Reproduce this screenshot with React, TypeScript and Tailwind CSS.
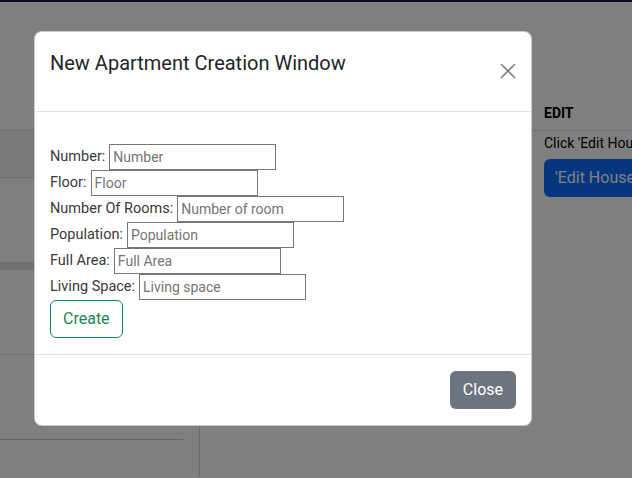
import { useState } from 'react';

const fields = [
  { label: 'Number:', placeholder: 'Number' },
  { label: 'Floor:', placeholder: 'Floor' },
  { label: 'Number Of Rooms:', placeholder: 'Number of room' },
  { label: 'Population:', placeholder: 'Population' },
  { label: 'Full Area:', placeholder: 'Full Area' },
  { label: 'Living Space:', placeholder: 'Living space' },
];

function CloseIcon() {
  return (
    <svg className="w-[16px] h-[16px]" viewBox="0 0 16 16" fill="none" stroke="#808080" strokeWidth={1.6}>
      <path d="M1 1l14 14M15 1L1 15" />
    </svg>
  );
}

export default function App() {
  const [values, setValues] = useState<Record<string, string>>({});

  return (
    <div className="relative w-[632px] h-[478px] overflow-hidden bg-white font-['Roboto',sans-serif] text-[#212529]">
      {/* Page behind the modal */}
      <div className="h-[2px] bg-[#1a1e3a]" />
      <div className="flex h-[129px] items-end border-b border-[#dedede]">
        <div className="flex-1" />
        <div className="w-[88px] pb-[6px] text-[14px] font-bold text-black">EDIT</div>
      </div>
      <div className="flex h-[346px]">
        <aside className="w-[200px] border-r border-[#d6d6d6]">
          <div className="h-[47px] bg-[#f5f5f5] border-b border-[#dedede]" />
          <div className="h-[84px]" />
          <div className="h-[8px] bg-[#e2e2e2]" />
          <div className="h-[85px] border-b border-[#dedede]" />
          <div className="h-[85px] w-[183px] border-b border-[#d0d0d0]" />
        </aside>
        <div className="flex-1" />
        <div className="w-[88px] overflow-hidden whitespace-nowrap pt-[3px]">
          <p className="text-[14px] leading-[18px] text-black">Click 'Edit House' to edit</p>
          <button className="mt-[7px] h-[38px] rounded-[6px] bg-[#0d6efd] px-[11px] text-[16px] text-white">
            'Edit House'
          </button>
        </div>
      </div>

      {/* Backdrop */}
      <div className="absolute inset-0 bg-black/50" />

      {/* Modal */}
      <div className="absolute left-[34px] top-[31px] w-[498px] rounded-[8px] border border-black/20 bg-white">
        <div className="flex h-[80px] items-start justify-between border-b border-[#dee2e6] pl-[15px] pr-[15px] pt-[16px]">
          <h5 className="text-[20px] leading-[30px] font-normal text-[#212529]">New Apartment Creation Window</h5>
          <button className="mt-[15px]">
            <CloseIcon />
          </button>
        </div>

        <div className="px-[15px] pt-[32px] pb-[16px]">
          {fields.map((f) => (
            <div key={f.label} className="flex h-[26px] items-center gap-[4px] text-[14.5px] text-[#383838]">
              <span>{f.label}</span>
              <input
                className="h-[26px] w-[167px] border border-[#767676] px-[3px] text-[14px] outline-none placeholder:text-[#757575]"
                placeholder={f.placeholder}
                value={values[f.label] ?? ''}
                onChange={(e) => setValues((prev) => ({ ...prev, [f.label]: e.target.value }))}
              />
            </div>
          ))}
          <button className="h-[38px] rounded-[6px] border border-[#198754] px-[12px] text-[16px] text-[#198754]">
            Create
          </button>
        </div>

        <div className="flex justify-end border-t border-[#dee2e6] py-[12px] pl-[12px] pr-[11px]">
          <button className="m-[4px] h-[38px] rounded-[6px] bg-[#6c757d] px-[13px] text-[16px] text-white">
            Close
          </button>
        </div>
      </div>
    </div>
  );
}
